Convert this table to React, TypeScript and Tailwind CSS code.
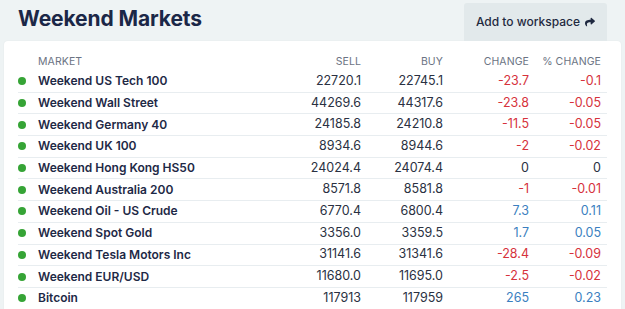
import React from "react";
import { FaShare } from "react-icons/fa";

type Row = { name: string; sell: string; buy: string; chg: string; pct: string };

const rows: Row[] = [
  { name: "Weekend US Tech 100", sell: "22720.1", buy: "22745.1", chg: "-23.7", pct: "-0.1" },
  { name: "Weekend Wall Street", sell: "44269.6", buy: "44317.6", chg: "-23.8", pct: "-0.05" },
  { name: "Weekend Germany 40", sell: "24185.8", buy: "24210.8", chg: "-11.5", pct: "-0.05" },
  { name: "Weekend UK 100", sell: "8934.6", buy: "8944.6", chg: "-2", pct: "-0.02" },
  { name: "Weekend Hong Kong HS50", sell: "24024.4", buy: "24074.4", chg: "0", pct: "0" },
  { name: "Weekend Australia 200", sell: "8571.8", buy: "8581.8", chg: "-1", pct: "-0.01" },
  { name: "Weekend Oil - US Crude", sell: "6770.4", buy: "6800.4", chg: "7.3", pct: "0.11" },
  { name: "Weekend Spot Gold", sell: "3356.0", buy: "3359.5", chg: "1.7", pct: "0.05" },
  { name: "Weekend Tesla Motors Inc", sell: "31141.6", buy: "31341.6", chg: "-28.4", pct: "-0.09" },
  { name: "Weekend EUR/USD", sell: "11680.0", buy: "11695.0", chg: "-2.5", pct: "-0.02" },
  { name: "Bitcoin", sell: "117913", buy: "117959", chg: "265", pct: "0.23" },
];

function colorFor(v: string) {
  if (v.startsWith("-")) return "text-[#d6323c]";
  if (v === "0") return "text-[#2a3142]";
  return "text-[#3b7fc0]";
}

export default function App() {
  return (
    <div
      className="w-[625px] h-[309px] overflow-hidden bg-[#eef3f4] px-[4px]"
      style={{ fontFamily: "Inter, 'Noto Sans', sans-serif" }}
    >
      <div className="flex items-start justify-between h-[41px]">
        <h1 className="pl-[14px] pt-[5px] text-[21px] leading-[28px] font-bold text-[#1b2747] tracking-[-0.1px]">
          Weekend Markets
        </h1>
        <button className="mt-[3px] mr-[14px] h-[38px] w-[143px] bg-[#e2e9eb] rounded-t-[3px] flex items-center justify-center gap-[5px] text-[12px] font-medium text-[#1f2940]">
          Add to workspace
          <FaShare className="w-[10px] h-[10px] text-[#1f2940]" />
        </button>
      </div>
      <div className="bg-white rounded-t-[4px] px-[14px] shadow-[0_0_2px_rgba(0,0,0,0.06)] h-[300px]">
        <div className="flex items-center h-[30px] pt-[12px] text-[10.5px] text-[#6b7383] tracking-[0.1px]">
          <div className="w-[20px]" />
          <div className="flex-1">MARKET</div>
          <div className="w-[100px] text-right">SELL</div>
          <div className="w-[82px] text-right">BUY</div>
          <div className="w-[86px] text-right">CHANGE</div>
          <div className="w-[72px] text-right">% CHANGE</div>
          <div className="w-[6px]" />
        </div>
        {rows.map((r) => (
          <div
            key={r.name}
            className="flex items-center h-[21.7px] border-b border-[#e8edf0] text-[12.5px]"
          >
            <div className="w-[20px] flex items-center">
              <span className="block w-[8px] h-[8px] rounded-full bg-[#36a436]" />
            </div>
            <div className="flex-1 text-[12px] font-semibold text-[#1e2946]">{r.name}</div>
            <div className="w-[100px] text-right text-[#2a3142]">{r.sell}</div>
            <div className="w-[82px] text-right text-[#2a3142]">{r.buy}</div>
            <div className={"w-[86px] text-right " + colorFor(r.chg)}>{r.chg}</div>
            <div className={"w-[72px] text-right " + colorFor(r.pct)}>{r.pct}</div>
            <div className="w-[6px]" />
          </div>
        ))}
      </div>
    </div>
  );
}
